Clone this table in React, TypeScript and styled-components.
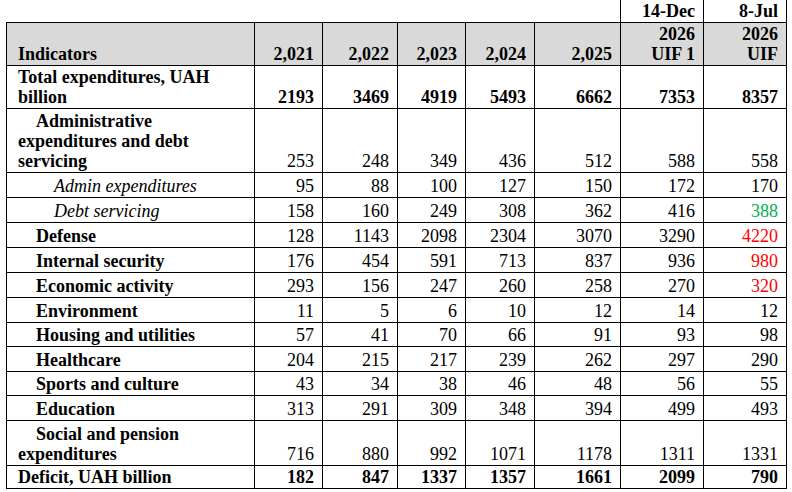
import React from 'react';
import styled, { createGlobalStyle, css } from 'styled-components';

type Tone = 'green' | 'red';
type Kind = 'total' | 'group' | 'item';

interface Row {
  label: string[];
  kind: Kind;
  values: number[];
  tones?: (Tone | undefined)[];
  h: number;
}

const years = ['2,021', '2,022', '2,023', '2,024', '2,025'];

const rows: Row[] = [
  { label: ['Total expenditures, UAH', 'billion'], kind: 'total', values: [2193, 3469, 4919, 5493, 6662, 7353, 8357], h: 43 },
  {
    label: ['Administrative', 'expenditures and debt', 'servicing'],
    kind: 'group',
    values: [253, 248, 349, 436, 512, 588, 558],
    h: 64,
  },
  { label: ['Admin expenditures'], kind: 'item', values: [95, 88, 100, 127, 150, 172, 170], h: 25 },
  {
    label: ['Debt servicing'],
    kind: 'item',
    values: [158, 160, 249, 308, 362, 416, 388],
    tones: [, , , , , , 'green'],
    h: 25,
  },
  {
    label: ['Defense'],
    kind: 'group',
    values: [128, 1143, 2098, 2304, 3070, 3290, 4220],
    tones: [, , , , , , 'red'],
    h: 25,
  },
  {
    label: ['Internal security'],
    kind: 'group',
    values: [176, 454, 591, 713, 837, 936, 980],
    tones: [, , , , , , 'red'],
    h: 25,
  },
  {
    label: ['Economic activity'],
    kind: 'group',
    values: [293, 156, 247, 260, 258, 270, 320],
    tones: [, , , , , , 'red'],
    h: 25,
  },
  { label: ['Environment'], kind: 'group', values: [11, 5, 6, 10, 12, 14, 12], h: 25 },
  { label: ['Housing and utilities'], kind: 'group', values: [57, 41, 70, 66, 91, 93, 98], h: 24 },
  { label: ['Healthcare'], kind: 'group', values: [204, 215, 217, 239, 262, 297, 290], h: 25 },
  { label: ['Sports and culture'], kind: 'group', values: [43, 34, 38, 46, 48, 56, 55], h: 24 },
  { label: ['Education'], kind: 'group', values: [313, 291, 309, 348, 394, 499, 493], h: 25 },
  {
    label: ['Social and pension', 'expenditures'],
    kind: 'group',
    values: [716, 880, 992, 1071, 1178, 1311, 1331],
    h: 45,
  },
  { label: ['Deficit, UAH billion'], kind: 'total', values: [182, 847, 1337, 1357, 1661, 2099, 790], h: 23 },
];

const colWidths = [248, 68, 75, 68, 69, 86, 83, 83];

const toneColor: Record<Tone, string> = {
  green: '#00b050',
  red: '#ff0000',
};

const indentFor: Record<Kind, number> = {
  total: 0,
  group: 18,
  item: 36,
};

const App = () => {
  return (
    <>
      <GlobalStyle />
      <Page>
        <Table>
          <colgroup>
            {colWidths.map((w, i) => (
              <col key={i} style={{ width: w }} />
            ))}
          </colgroup>
          <tbody>
            <TableRow $h={22}>
              <BlankCell colSpan={6} />
              <DateCell>14-Dec</DateCell>
              <DateCell>8-Jul</DateCell>
            </TableRow>
            <TableRow $h={43}>
              <HeadCell $align='left'>Indicators</HeadCell>
              {years.map((y) => (
                <HeadCell key={y} $align='right'>
                  {y}
                </HeadCell>
              ))}
              <HeadCell $align='right'>
                2026
                <br />
                UIF 1
              </HeadCell>
              <HeadCell $align='right'>
                2026
                <br />
                UIF
              </HeadCell>
            </TableRow>
            {rows.map((row) => (
              <TableRow key={row.label.join(' ')} $h={row.h}>
                <LabelCell $kind={row.kind}>
                  {row.label.map((line, i) => (
                    <React.Fragment key={line}>
                      {i > 0 && <br />}
                      {line}
                    </React.Fragment>
                  ))}
                </LabelCell>
                {row.values.map((v, i) => (
                  <ValueCell key={i} $bold={row.kind === 'total'} $tone={row.tones?.[i]}>
                    {v}
                  </ValueCell>
                ))}
              </TableRow>
            ))}
          </tbody>
        </Table>
      </Page>
    </>
  );
};

export default App;

const GlobalStyle = createGlobalStyle`
  html, body {
    margin: 0;
    padding: 0;
    background: #fff;
  }

  body {
    font-family: "Liberation Serif", "Times New Roman", serif;
    color: #000;
  }
`;

const Page = styled.div`
  padding-left: 6px;
`;

const Table = styled.table`
  border-collapse: collapse;
  table-layout: fixed;
  width: 781px;
  font-family: "Liberation Serif", "Times New Roman", serif;
  font-size: 18px;
  line-height: 20px;
  color: #000;
`;

const TableRow = styled.tr<{ $h: number }>`
  height: ${({ $h }) => $h}px;
`;

const baseCell = css`
  border: 1px solid #000;
  vertical-align: bottom;
  white-space: nowrap;
  padding: 0 8px 1px 10px;
`;

const BlankCell = styled.td`
  border: none;
  padding: 0;
`;

const DateCell = styled.td`
  ${baseCell};
  border-top: none;
  text-align: right;
  font-weight: 700;
`;

const HeadCell = styled.td<{ $align: 'left' | 'right' }>`
  ${baseCell};
  background: #d9d9d9;
  font-weight: 700;
  text-align: ${({ $align }) => $align};
  padding-left: 11px;
`;

const LabelCell = styled.td<{ $kind: Kind }>`
  ${baseCell};
  padding-left: 11px;
  text-indent: ${({ $kind }) => indentFor[$kind]}px;
  font-weight: ${({ $kind }) => ($kind === 'item' ? 400 : 700)};
  font-style: ${({ $kind }) => ($kind === 'item' ? 'italic' : 'normal')};
`;

const ValueCell = styled.td<{ $bold: boolean; $tone?: Tone }>`
  ${baseCell};
  text-align: right;
  font-weight: ${({ $bold }) => ($bold ? 700 : 400)};
  color: ${({ $tone }) => ($tone ? toneColor[$tone] : '#000')};
`;
